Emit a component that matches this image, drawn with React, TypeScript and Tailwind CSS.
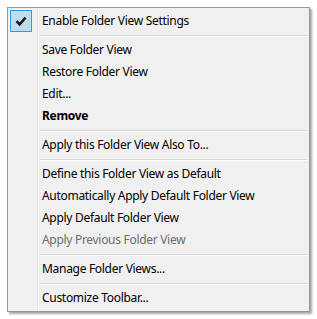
const groups: { label: string; bold?: boolean; disabled?: boolean; checked?: boolean }[][] = [
  [{ label: "Enable Folder View Settings", checked: true }],
  [
    { label: "Save Folder View" },
    { label: "Restore Folder View" },
    { label: "Edit..." },
    { label: "Remove", bold: true },
  ],
  [{ label: "Apply this Folder View Also To..." }],
  [
    { label: "Define this Folder View as Default" },
    { label: "Automatically Apply Default Folder View" },
    { label: "Apply Default Folder View" },
    { label: "Apply Previous Folder View", disabled: true },
  ],
  [{ label: "Manage Folder Views..." }],
  [{ label: "Customize Toolbar..." }],
];

function Check() {
  return (
    <svg width="12" height="12" viewBox="0 0 12 12">
      <path d="M1.5 6.2 L4.6 9.4 L10.6 2.6" fill="none" stroke="#1a1a1a" strokeWidth="2.4" />
    </svg>
  );
}

export default function App() {
  return (
    <div className="w-[317px] h-[319px] bg-white pl-[7px] pt-[7px]">
      <div
        className="relative w-[303px] border border-[#979797] bg-[#f0f0f0] py-[2px] shadow-[2px_2px_2px_rgba(0,0,0,0.35)]"
        style={{ fontFamily: '"Noto Sans", "Open Sans", sans-serif' }}
      >
        <div className="absolute left-[29px] top-0 bottom-0 w-px bg-[#e2e2e2]" />
        <div className="absolute left-[30px] top-0 bottom-0 w-px bg-white" />
        {groups.map((group, gi) => (
          <div key={gi}>
            {gi > 0 && (
              <div className="h-[7px] flex items-center pl-[32px] pr-[2px]">
                <div className="w-full h-[2px] border-t border-[#d7d7d7] border-b border-b-white" />
              </div>
            )}
            {group.map((item) => (
              <div key={item.label} className="h-[22px] flex items-center">
                <div className="w-[30px] h-full flex items-center pl-[2px]">
                  {item.checked && (
                    <div className="w-[22px] h-[22px] border border-[#3399e0] bg-[#bfdcee] flex items-center justify-center">
                      <Check />
                    </div>
                  )}
                </div>
                <span
                  className={
                    "ml-[4px] text-[12px] leading-none tracking-[-0.3px] " +
                    (item.bold ? "font-bold " : "") +
                    (item.disabled ? "text-[#6d6d6d]" : "text-black")
                  }
                >
                  {item.label}
                </span>
              </div>
            ))}
          </div>
        ))}
      </div>
    </div>
  );
}
